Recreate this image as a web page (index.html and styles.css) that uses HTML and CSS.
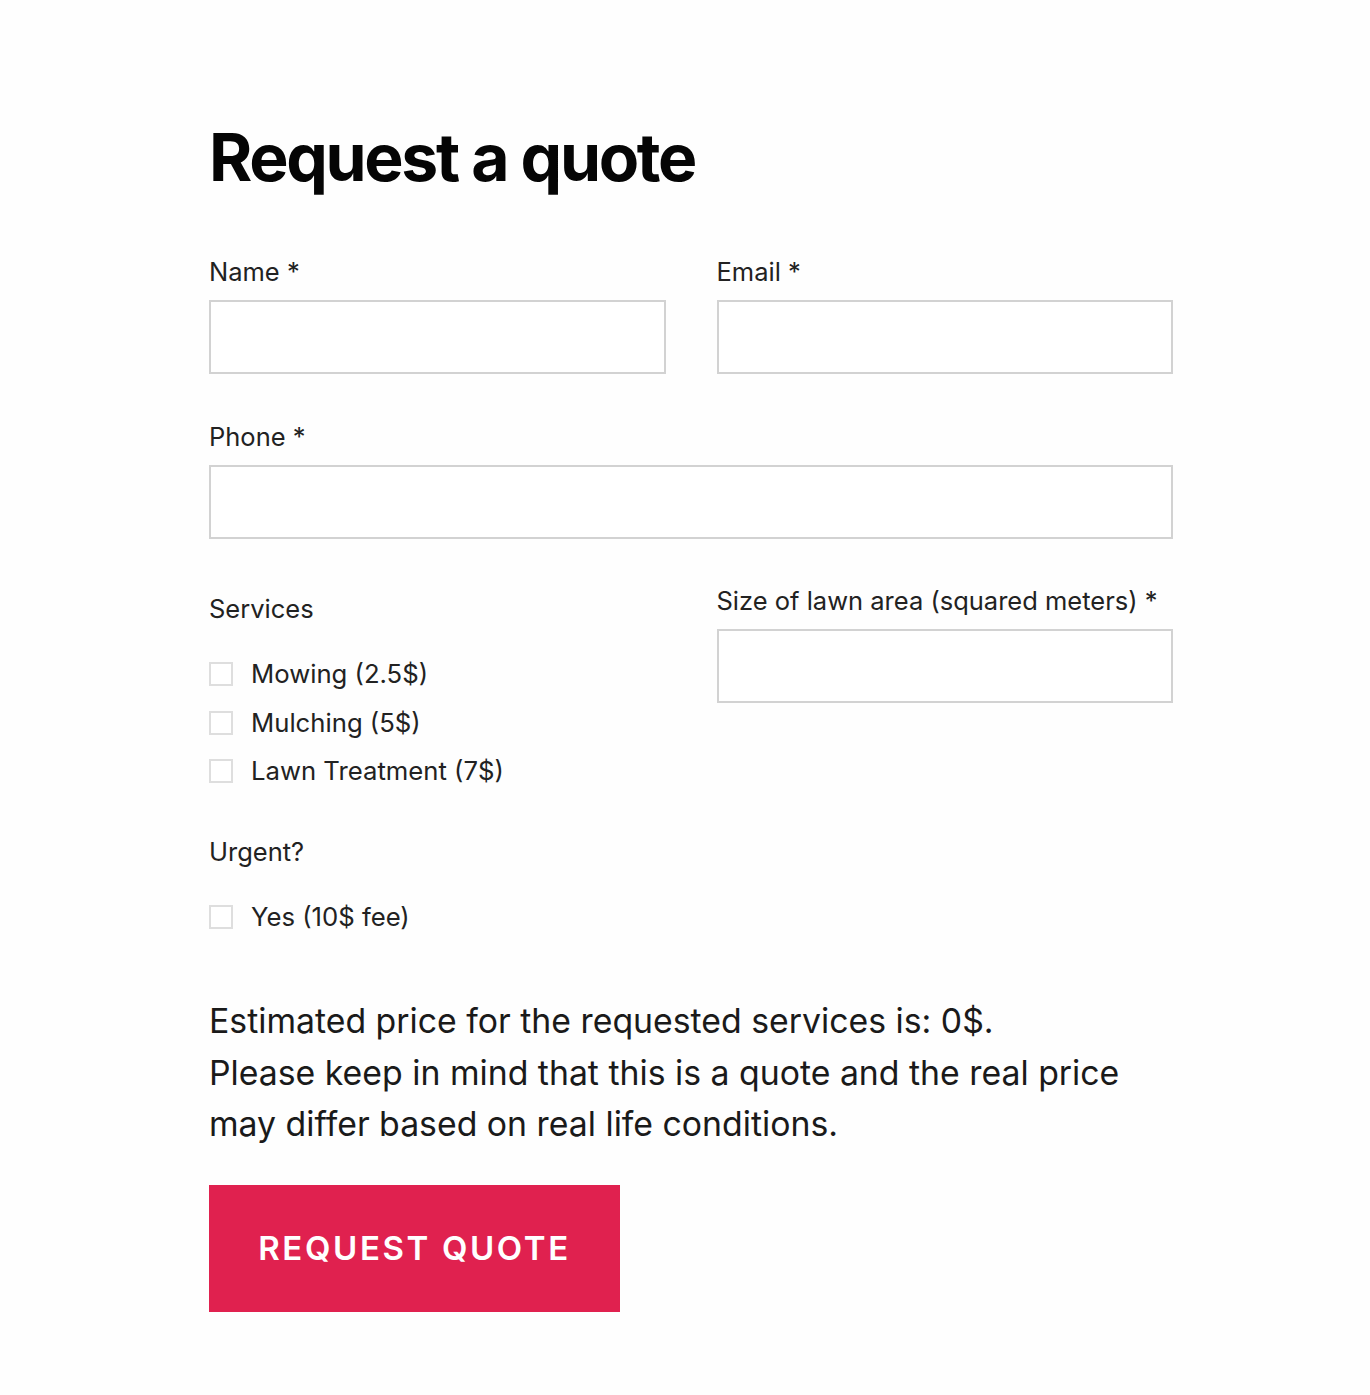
FILE: index.html
```html
<!DOCTYPE html>
<html lang="en">
<head>
<meta charset="utf-8">
<title>Request a quote</title>
<link rel="stylesheet" href="styles.css">
</head>
<body>
<main class="page">
  <form class="quote-form">
    <h1 class="title">Request a quote</h1>
    <div class="row two">
      <div class="field">
        <label class="label">Name *</label>
        <input class="input" type="text">
      </div>
      <div class="field">
        <label class="label">Email *</label>
        <input class="input" type="email">
      </div>
    </div>
    <div class="row">
      <div class="field">
        <label class="label">Phone *</label>
        <input class="input" type="tel">
      </div>
    </div>
    <div class="row two services-row">
      <div class="group">
        <div class="label group-label">Services</div>
        <label class="check"><span class="box"></span>Mowing (2.5$)</label>
        <label class="check"><span class="box"></span>Mulching (5$)</label>
        <label class="check"><span class="box"></span>Lawn Treatment (7$)</label>
      </div>
      <div class="field">
        <label class="label">Size of lawn area (squared meters) *</label>
        <input class="input" type="text">
      </div>
    </div>
    <div class="group urgent">
      <div class="label group-label">Urgent?</div>
      <label class="check"><span class="box"></span>Yes (10$ fee)</label>
    </div>
    <p class="estimate">Estimated price for the requested services is: 0$.<br>Please keep in mind that this is a quote and the real price may differ based on real life conditions.</p>
    <button class="submit" type="button">REQUEST QUOTE</button>
  </form>
</main>
</body>
</html>
```
FILE: styles.css
```css
* { box-sizing: border-box; }
html, body { margin: 0; background: #fefefe; }
body { font-family: Inter, "Noto Sans", sans-serif; color: #1e1e1e; }
.page { padding: 117px 0 0 209px; }
.quote-form { width: 964px; }
.title { margin: 0 0 60px; font-size: 66px; font-weight: 700; letter-spacing: -2.3px; line-height: 80px; color: #050505; }
.row { display: grid; gap: 51px; margin-bottom: 47.5px; }
.row.two { grid-template-columns: 1fr 1fr; }
.field { display: flex; flex-direction: column; }
.label { font-size: 25.5px; line-height: 30px; margin-bottom: 13px; color: #222; }
.input { height: 74px; border: 2px solid #d2d2d2; background: #fff; width: 100%; font: inherit; }
.services-row { margin-bottom: 33px; }
.group { display: flex; flex-direction: column; padding-top: 8px; }
.group-label { margin-bottom: 26px; }
.check { display: flex; align-items: center; gap: 18px; font-size: 25.7px; line-height: 30px; height: 48.5px; color: #222; }
.box { width: 24px; height: 24px; border: 2px solid #dedede; background: #fff; flex: none; }
.urgent { margin-bottom: 54px; }
.estimate { margin: 0 0 35px; font-size: 33.8px; line-height: 51.5px; color: #1a1a1a; }
.submit { width: 411px; height: 127px; border: 0; background: #e0214f; color: #fff; font-family: Inter, sans-serif; font-size: 33px; font-weight: 600; letter-spacing: 2.6px; }
```
